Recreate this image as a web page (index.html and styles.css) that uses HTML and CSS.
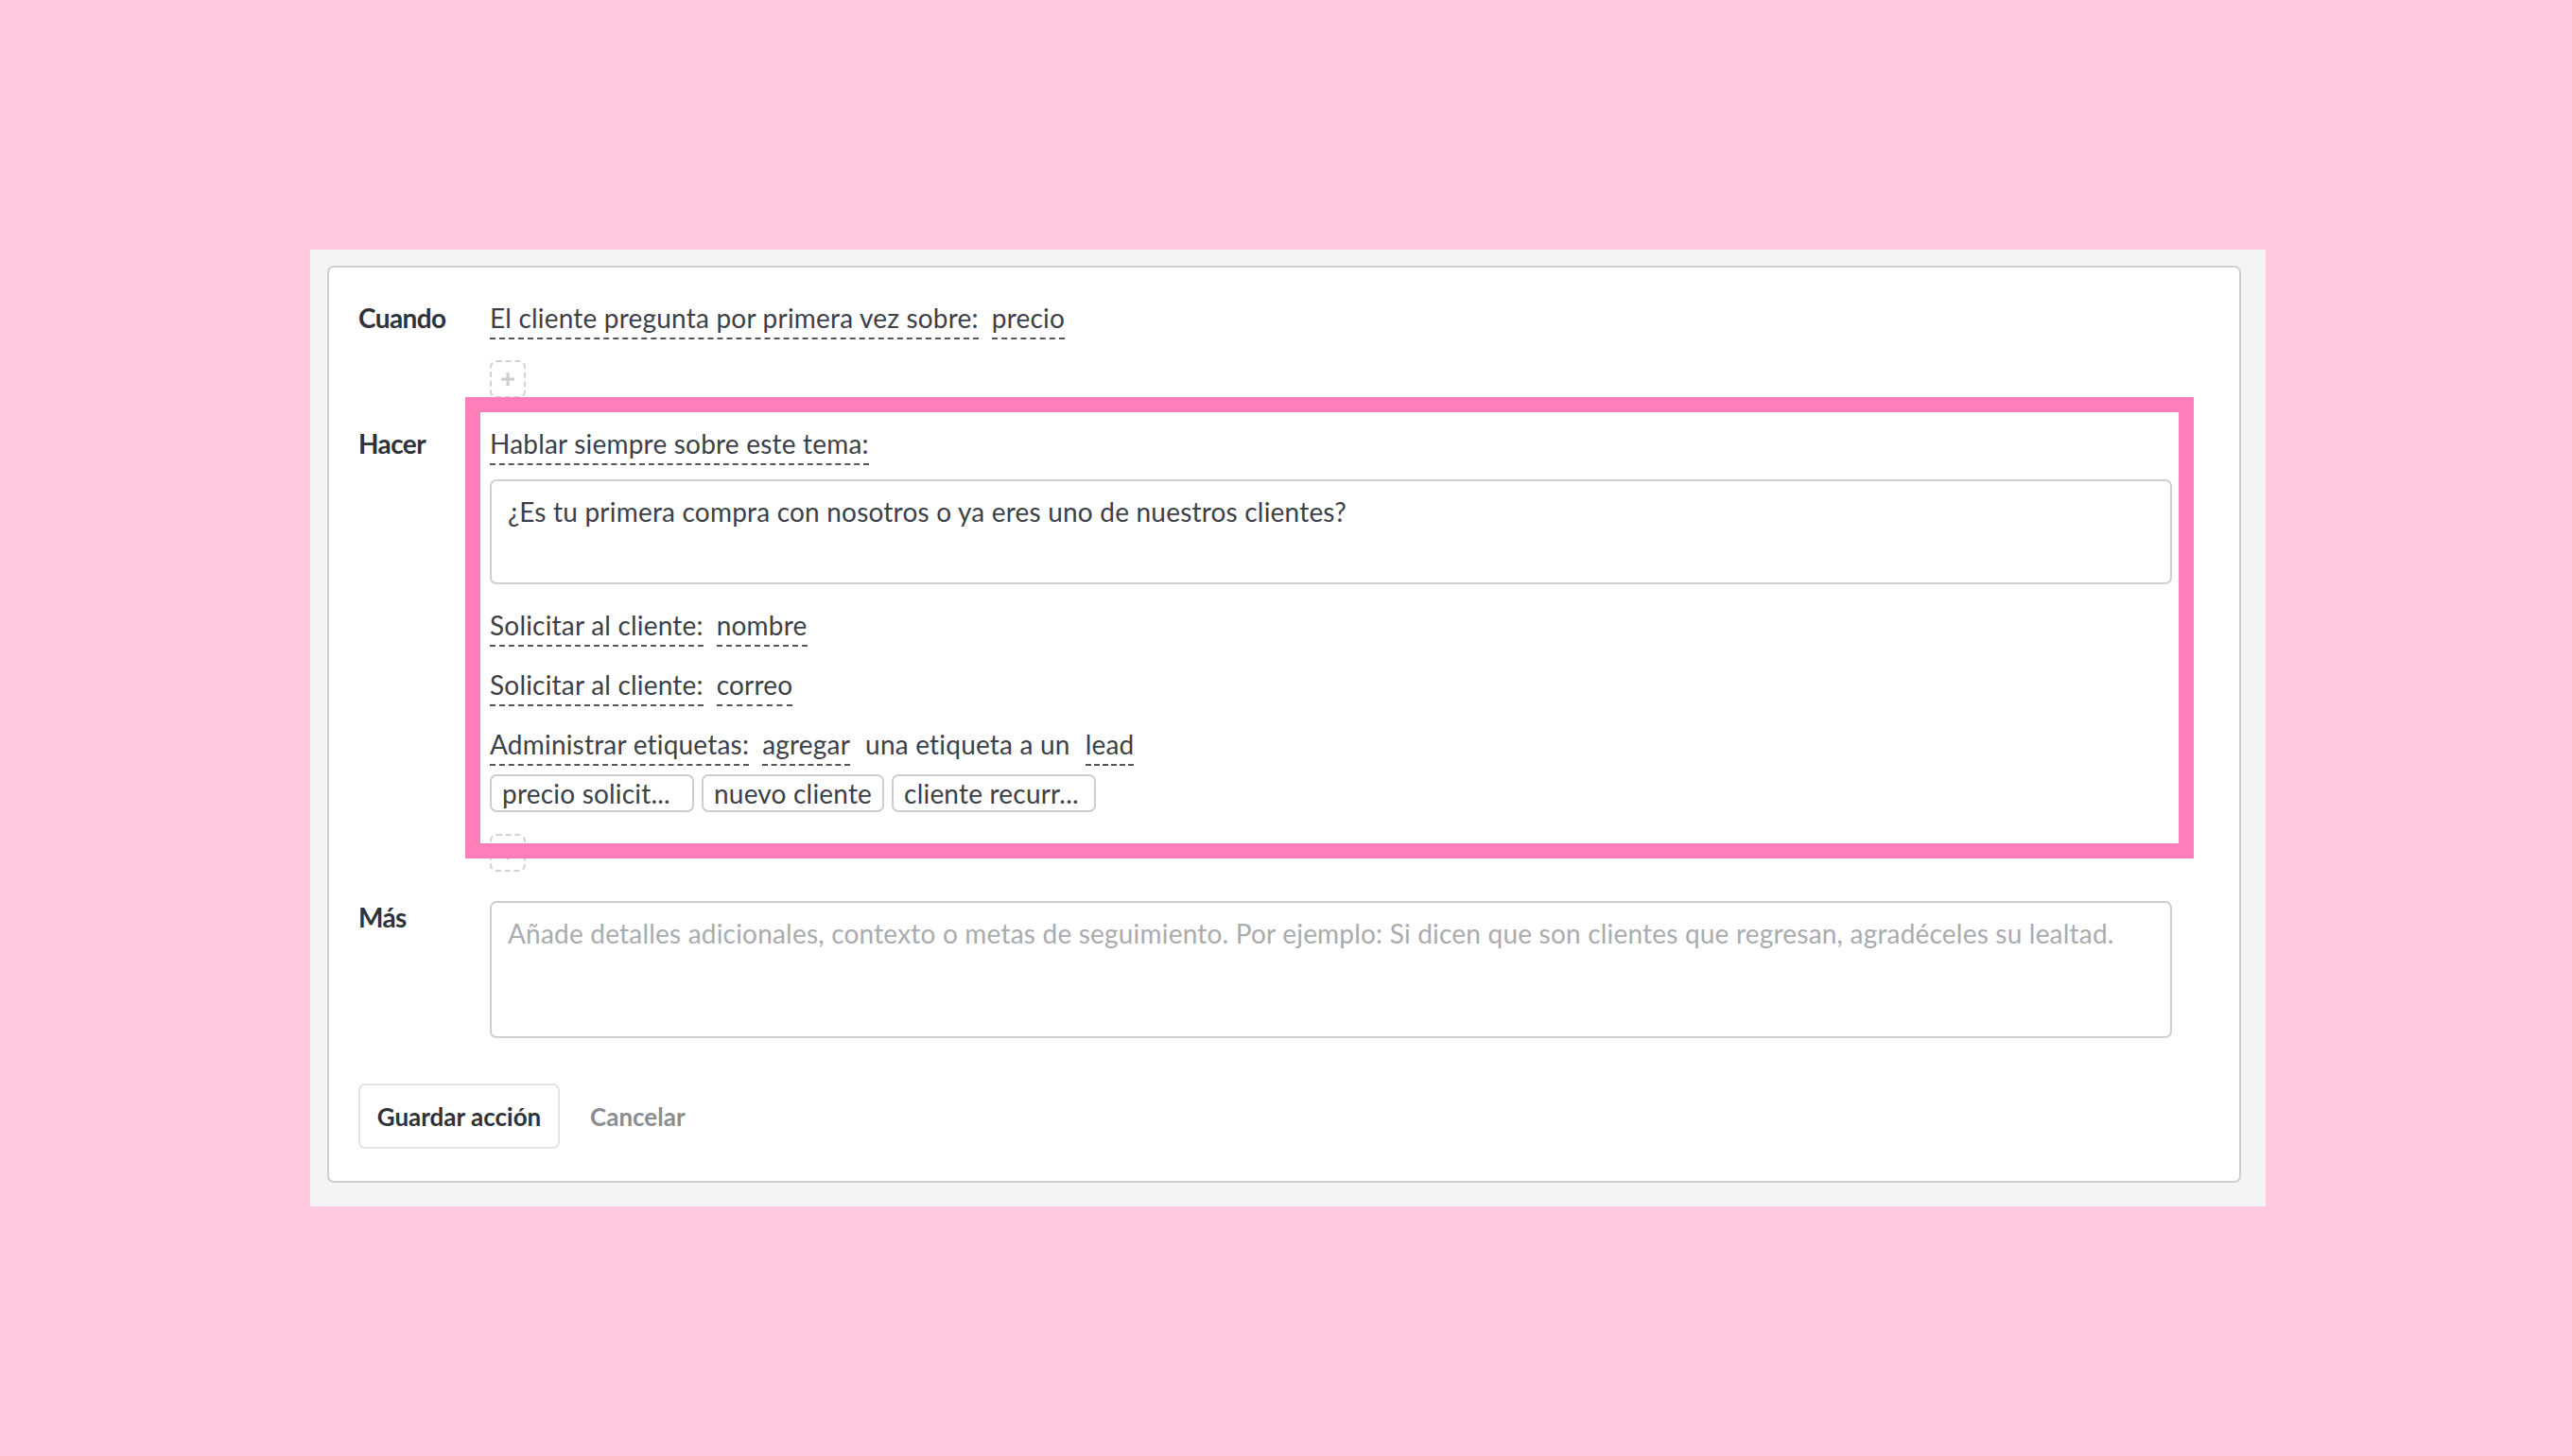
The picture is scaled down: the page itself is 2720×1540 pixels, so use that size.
FILE: index.html
```html
<!DOCTYPE html>
<html lang="es">
<head>
<meta charset="utf-8">
<title>Acción</title>
<link rel="stylesheet" href="styles.css">
</head>
<body>
<div class="stage">
  <div class="panel">
    <div class="card">
      <div class="row row-when">
        <div class="label">Cuando</div>
        <div class="content">
          <div class="line"><span class="dash">El cliente pregunta por primera vez sobre:</span><span class="dash">precio</span></div>
          <div class="add"><svg width="16" height="16" viewBox="0 0 16 16"><path d="M8 1v14M1 8h14" stroke="#cdcdcd" stroke-width="3" fill="none"/></svg></div>
        </div>
      </div>
      <div class="row row-do">
        <div class="label">Hacer</div>
        <div class="content do">
          <div class="line"><span class="dash">Hablar siempre sobre este tema:</span></div>
          <div class="textbox q">¿Es tu primera compra con nosotros o ya eres uno de nuestros clientes?</div>
          <div class="line ask"><span class="dash">Solicitar al cliente:</span><span class="dash">nombre</span></div>
          <div class="line ask"><span class="dash">Solicitar al cliente:</span><span class="dash">correo</span></div>
          <div class="line ask"><span class="dash">Administrar etiquetas:</span><span class="dash">agregar</span><span class="plain">una etiqueta a un</span><span class="dash">lead</span></div>
          <div class="tags">
            <span class="tag trunc">precio solicit...</span>
            <span class="tag">nuevo cliente</span>
            <span class="tag trunc">cliente recurr...</span>
          </div>
          <div class="add add2"><svg width="16" height="16" viewBox="0 0 16 16"><path d="M8 1v14M1 8h14" stroke="#cdcdcd" stroke-width="3" fill="none"/></svg></div>
          <div class="highlight"></div>
        </div>
      </div>
      <div class="row row-more">
        <div class="label more-label">Más</div>
        <div class="content">
          <div class="textbox more">Añade detalles adicionales, contexto o metas de seguimiento. Por ejemplo: Si dicen que son clientes que regresan, agradéceles su lealtad.</div>
        </div>
      </div>
      <div class="actions">
        <button class="btn save" type="button">Guardar acción</button>
        <button class="btn cancel" type="button">Cancelar</button>
      </div>
    </div>
  </div>
</div>
</body>
</html>
```

FILE: styles.css
```css
html, body {
  margin: 0;
  padding: 0;
}

body {
  width: 2720px;
  height: 1540px;
  background: #ffcae0;
  font-family: Lato, "Open Sans", sans-serif;
  font-size: 28px;
  letter-spacing: 0.2px;
  color: #3c4047;
  overflow: hidden;
}

.stage {
  padding: 264px 0 0 328px;
}

.panel {
  width: 2068px;
  box-sizing: border-box;
  background: #f4f4f4;
  padding: 17px 26px 25px 18px;
}

.card {
  background: #fff;
  border: 2px solid #cfcfcf;
  border-radius: 7px;
  padding: 32px 71px 34px 31px;
}

.row {
  display: grid;
  grid-template-columns: 139px 1fr;
}

.label {
  font-weight: 700;
  color: #2e3239;
  line-height: 42px;
  letter-spacing: -0.6px;
}

.content {
  min-width: 0;
}

.line {
  display: flex;
  align-items: flex-start;
  gap: 14px;
  line-height: 42px;
}

.dash {
  border-bottom: 2px dashed #53575d;
}

.plain {
  padding: 0 2px;
}

.add {
  margin-top: 22px;
  width: 38px;
  height: 40px;
  box-sizing: border-box;
  border: 2px dashed #d2d2d2;
  border-radius: 7px;
  display: flex;
  align-items: center;
  justify-content: center;
}

.row-do {
  margin-top: 27px;
}

.do {
  position: relative;
}

.textbox {
  border: 2px solid #cfcfcf;
  border-radius: 7px;
  padding: 11px 17px;
  line-height: 42px;
  box-sizing: border-box;
}

.q {
  margin-top: 15px;
  height: 111px;
}

.q + .ask {
  margin-top: 22px;
}

.ask + .ask {
  margin-top: 19px;
}

.tags {
  margin-top: 9px;
  display: flex;
  gap: 8px;
}

.tag {
  height: 40px;
  box-sizing: border-box;
  border: 2px solid #cdcdcd;
  border-radius: 7px;
  padding: 0 11px;
  line-height: 36px;
  white-space: nowrap;
}

.tag.trunc {
  width: 216px;
}

.add2 {
  margin-top: 23px;
}

.highlight {
  position: absolute;
  top: -28px;
  left: -26px;
  right: -23px;
  bottom: 14px;
  border: 16px solid #ff7eb9;
  pointer-events: none;
}

.row-more {
  margin-top: 31px;
}

.more-label {
  margin-top: -4px;
}

.more {
  height: 145px;
  color: #a9abae;
}

.actions {
  margin-top: 48px;
  display: flex;
  align-items: center;
  gap: 32px;
}

.btn {
  font-family: Lato, "Open Sans", sans-serif;
  font-size: 26px;
  font-weight: 700;
  letter-spacing: 0;
  background: #fff;
  margin: 0;
}

.save {
  width: 213px;
  height: 69px;
  border: 2px solid #e4e4e4;
  border-radius: 7px;
  color: #2e3239;
  padding: 0;
}

.cancel {
  border: none;
  padding: 0;
  color: #8a8d92;
}
```
